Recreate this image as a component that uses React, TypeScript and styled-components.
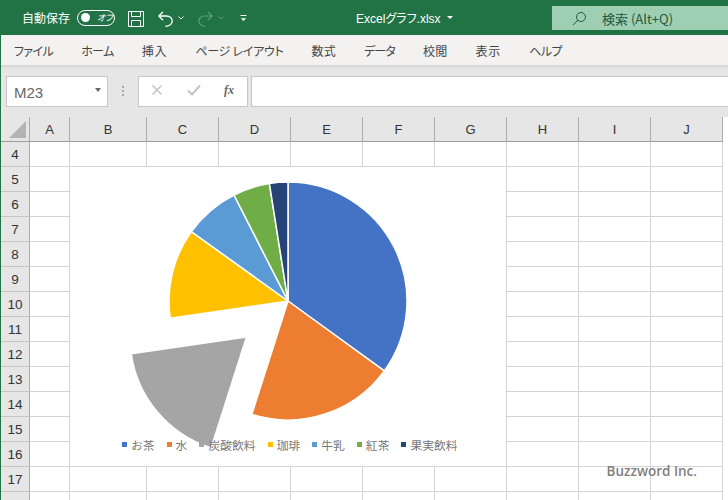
import React from 'react'
import styled, { createGlobalStyle } from 'styled-components'

const GlobalStyle = createGlobalStyle`
  html, body {
    margin: 0;
    padding: 0;
    width: 728px;
    height: 500px;
    overflow: hidden;
    background: #e6e6e6;
    font-family: 'Noto Sans CJK JP', 'Liberation Sans', sans-serif;
  }
`

const FONT = `'Noto Sans CJK JP', 'Liberation Sans', sans-serif`
const LATIN = `'Liberation Sans', 'Noto Sans CJK JP', sans-serif`

const Window = styled.div`
  position: relative;
  width: 728px;
  height: 500px;
  overflow: hidden;
  display: flex;
  flex-direction: column;
`
const TitleBar = styled.div`
  height: 35px;
  flex: none;
  background: #217346;
  display: flex;
  align-items: center;
  color: #fff;
  font-size: 12px;
`
const AutoSave = styled.span`
  margin-left: 22px;
  width: 55px;
  flex: none;
`
const Toggle = styled.div`
  width: 38px;
  height: 16px;
  flex: none;
  box-sizing: border-box;
  border: 1px solid #fff;
  border-radius: 8px;
  display: flex;
  align-items: center;
  font-size: 9px;
  font-style: italic;
  font-feature-settings: 'palt';
  white-space: nowrap;
`
const Knob = styled.i`
  width: 9px;
  height: 9px;
  flex: none;
  border-radius: 50%;
  background: #fff;
  margin: 0 7px 0 3px;
`
const TitleIcon = styled.svg<{ $left: number; $top?: number }>`
  flex: none;
  margin-left: ${(p) => p.$left}px;
  margin-top: ${(p) => p.$top ?? 0}px;
  overflow: visible;
`
const FileName = styled.div`
  margin-left: 109px;
  width: 196px;
  flex: none;
  font-family: ${LATIN};
  font-size: 12px;
  font-feature-settings: 'palt';
  display: flex;
  align-items: center;
`
const Caret = styled.i`
  margin-left: 6px;
  border-left: 3px solid transparent;
  border-right: 3px solid transparent;
  border-top: 3px solid #fff;
`
const SearchBox = styled.div`
  width: 176px;
  height: 24px;
  flex: none;
  margin-top: 1px;
  background: #9fcfb3;
  color: #24583c;
  display: flex;
  align-items: center;
  font-size: 13px;
  font-family: ${FONT};
`
const SearchLabel = styled.span`
  margin-left: 15px;
  white-space: nowrap;
`
const MenuBar = styled.nav`
  height: 30px;
  flex: none;
  background: #f3f2f1;
  border-left: 1px solid #217346;
  padding-left: 13px;
  display: flex;
  align-items: center;
  gap: 28px;
  font-size: 12px;
  font-feature-settings: 'palt';
  color: #444;
  box-sizing: border-box;
`
const MenuItem = styled.span<{ $spacing: number }>`
  white-space: nowrap;
  letter-spacing: ${(p) => p.$spacing}px;
`
const FormulaBar = styled.div`
  height: 52px;
  flex: none;
  box-sizing: border-box;
  background: linear-gradient(#d4d4d4 0, #e6e6e6 4px);
  border-left: 1px solid #217346;
  padding: 11px 0 10px 5px;
  display: flex;
  align-items: stretch;
`
const NameBox = styled.div`
  width: 102px;
  flex: none;
  box-sizing: border-box;
  background: #fff;
  border: 1px solid #c6c6c6;
  padding: 2px 6px 0 7px;
  display: flex;
  align-items: center;
  justify-content: space-between;
  font-family: ${LATIN};
  font-size: 15px;
  color: #666;
`
const DownArrow = styled.i`
  border-left: 3.5px solid transparent;
  border-right: 3.5px solid transparent;
  border-top: 4px solid #666;
  margin-top: -5px;
`
const Dots = styled.div`
  width: 30px;
  flex: none;
  display: flex;
  flex-direction: column;
  align-items: center;
  justify-content: center;
  gap: 2px;
  margin-top: -2px;
  i {
    width: 2px;
    height: 2px;
    background: #aaa;
  }
`
const FormulaButtons = styled.div`
  width: 110px;
  flex: none;
  box-sizing: border-box;
  background: #fff;
  border: 1px solid #c6c6c6;
  display: flex;
  align-items: center;
  justify-content: space-between;
  padding: 0 13px 3px 12px;
`
const Fx = styled.span`
  font-family: 'Liberation Serif', serif;
  font-style: italic;
  font-weight: bold;
  font-size: 12px;
  color: #666;
`
const FormulaInput = styled.div`
  flex: 1;
  margin-left: 3px;
  background: #fff;
  border: 1px solid #c6c6c6;
  border-right: none;
`
const Sheet = styled.div`
  flex: 1;
  min-height: 0;
  overflow: hidden;
  display: grid;
  grid-template-columns: 29px 40px 77px repeat(8, 72px);
  grid-template-rows: 25px repeat(15, 25px);
  background: #fff;
  border-left: 1px solid #217346;
  position: relative;
`
const CornerCell = styled.div`
  background: #e6e6e6;
  border-right: 1px solid #ababab;
  border-bottom: 1px solid #9d9d9d;
  box-sizing: border-box;
  display: flex;
  align-items: flex-end;
  justify-content: flex-end;
  padding: 0 3px 3px 0;
`
const CornerMark = styled.i`
  width: 0;
  height: 0;
  border-left: 17px solid transparent;
  border-bottom: 17px solid #b4b4b4;
`
const ColHeader = styled.div`
  background: #e6e6e6;
  border-right: 1px solid #ababab;
  border-bottom: 1px solid #9d9d9d;
  box-sizing: border-box;
  display: flex;
  align-items: center;
  justify-content: center;
  font-family: ${LATIN};
  font-size: 13px;
  color: #333;
`
const RowHeader = styled.div`
  background: #e6e6e6;
  border-right: 1px solid #ababab;
  border-bottom: 1px solid #c6c6c6;
  box-sizing: border-box;
  display: flex;
  align-items: center;
  justify-content: center;
  font-family: ${LATIN};
  font-size: 13.5px;
  color: #333;
`
const Cell = styled.div`
  border-right: 1px solid #d4d4d4;
  border-bottom: 1px solid #d4d4d4;
  box-sizing: border-box;
`
const Chart = styled.div`
  position: absolute;
  left: 69px;
  top: 50px;
  width: 436px;
  height: 299px;
  background: #fff;
`
const PieSvg = styled.svg`
  display: block;
  width: 436px;
  height: 299px;
`
const Legend = styled.div`
  position: absolute;
  left: 52px;
  top: 268px;
  height: 18px;
  display: flex;
  align-items: center;
  gap: 12px;
  font-size: 11.8px;
  color: #777;
  white-space: nowrap;
`
const LegendItem = styled.div`
  display: flex;
  align-items: center;
  gap: 4px;
`
const Swatch = styled.i<{ $color: string }>`
  width: 5px;
  height: 5px;
  background: ${(p) => p.$color};
`
const Watermark = styled.div`
  position: absolute;
  right: 31px;
  bottom: 20px;
  font-family: 'Open Sans', 'Liberation Sans', sans-serif;
  font-weight: 600;
  font-size: 13.5px;
  color: #7f7f7f;
`

const CX = 218
const CY = 134
const R = 119

const polar = (deg: number, r: number, cx: number, cy: number) => {
  const a = (deg * Math.PI) / 180
  return [cx + r * Math.sin(a), cy - r * Math.cos(a)]
}

const slicePath = (from: number, to: number, cx: number, cy: number, r: number) => {
  const [x1, y1] = polar(from, r, cx, cy)
  const [x2, y2] = polar(to, r, cx, cy)
  const large = to - from > 180 ? 1 : 0
  return `M${cx} ${cy}L${x1.toFixed(2)} ${y1.toFixed(2)}A${r} ${r} 0 ${large} 1 ${x2.toFixed(2)} ${y2.toFixed(2)}Z`
}

const slices = [
  { name: 'お茶', color: '#4472c4', from: 0, to: 126 },
  { name: '水', color: '#ed7d31', from: 126, to: 197.7 },
  { name: '炭酸飲料', color: '#a5a5a5', from: 197.7, to: 261.7, dx: -41.5, dy: 36, r: 116.5 },
  { name: '珈琲', color: '#ffc000', from: 261.7, to: 305.7 },
  { name: '牛乳', color: '#5b9bd5', from: 305.7, to: 333 },
  { name: '紅茶', color: '#70ad47', from: 333, to: 351 },
  { name: '果実飲料', color: '#264478', from: 351, to: 360 }
]

const columns = ['A', 'B', 'C', 'D', 'E', 'F', 'G', 'H', 'I', 'J']
const rows = Array.from({ length: 15 }, (_, i) => i + 4)
const menus = [
  { label: 'ファイル', spacing: -0.6 },
  { label: 'ホーム', spacing: -0.6 },
  { label: '挿入', spacing: 0.8 },
  { label: 'ページ レイアウト', spacing: -0.27 },
  { label: '数式', spacing: 0.3 },
  { label: 'データ', spacing: -0.9 },
  { label: '校閲', spacing: 0.3 },
  { label: '表示', spacing: 0.8 },
  { label: 'ヘルプ', spacing: -0.6 }
]

const App = () => (
  <Window>
    <GlobalStyle />
    <TitleBar>
      <AutoSave>自動保存</AutoSave>
      <Toggle>
        <Knob />
        オフ
      </Toggle>
      <TitleIcon $left={13} $top={3} width='16' height='16' viewBox='0 0 16 16' fill='none' stroke='#fff' strokeWidth='1'>
        <path d='M.5.5h15v15H.5zM3.5.5v5h9v-5M3.5 15.5v-6h9v6' />
      </TitleIcon>
      <TitleIcon $left={14} $top={3} width='15' height='16' viewBox='0 0 15 16' fill='none' stroke='#fff' strokeWidth='1.3'>
        <path d='M5 .8L.8 5 5 9.200M.8 5H8.500C12 5 14.200 7.200 14.200 10c0 2.500-2 4.800-6.700 5.500' />
      </TitleIcon>
      <TitleIcon $left={5} width='6' height='4' viewBox='0 0 6 4' fill='none' stroke='#fff' strokeWidth='1'>
        <path d='M.5.5l2.5 2.5L5.500.5' />
      </TitleIcon>
      <TitleIcon $left={14} $top={3} width='15' height='16' viewBox='0 0 15 16' fill='none' stroke='#5f9c7c' strokeWidth='1.200'>
        <path d='M10 .8L14.200 5 10 9.200M14.200 5H6.500C3 5 .8 7.200.8 10c0 2.500 2 4.800 6.700 5.500' />
      </TitleIcon>
      <TitleIcon $left={5} width='6' height='4' viewBox='0 0 6 4' fill='none' stroke='#5f9c7c' strokeWidth='1'>
        <path d='M.5.5l2.500 2.500L5.500.5' />
      </TitleIcon>
      <TitleIcon $left={16} $top={1} width='7' height='7' viewBox='0 0 7 7' fill='none' stroke='#fff' strokeWidth='1'>
        <path d='M.5.5h6' />
        <path d='M.8 3.200h5.400L3.500 6z' fill='#fff' stroke='none' />
      </TitleIcon>
      <FileName>
        Excelグラフ.xlsx
        <Caret />
      </FileName>
      <SearchBox>
        <TitleIcon $left={20} width='15' height='15' viewBox='0 0 15 15' fill='none' stroke='#24583c' strokeWidth='1'>
          <circle cx='9' cy='6' r='4.500' />
          <path d='M5.800 9.200L1 14' />
        </TitleIcon>
        <SearchLabel>検索 (Alt+Q)</SearchLabel>
      </SearchBox>
    </TitleBar>
    <MenuBar>
      {menus.map((m) => (
        <MenuItem key={m.label} $spacing={m.spacing}>
          {m.label}
        </MenuItem>
      ))}
    </MenuBar>
    <FormulaBar>
      <NameBox>
        M23
        <DownArrow />
      </NameBox>
      <Dots>
        <i />
        <i />
        <i />
      </Dots>
      <FormulaButtons>
        <svg width='12' height='12' viewBox='0 0 12 12' fill='none' stroke='#c4c4c4' strokeWidth='1.500'>
          <path d='M1.500 1.500l9 9M10.500 1.500l-9 9' />
        </svg>
        <svg width='14' height='12' viewBox='0 0 14 12' fill='none' stroke='#c4c4c4' strokeWidth='2'>
          <path d='M1 6.500l4 4 8-9' />
        </svg>
        <Fx>fx</Fx>
      </FormulaButtons>
      <FormulaInput />
    </FormulaBar>
    <Sheet>
      <CornerCell>
        <CornerMark />
      </CornerCell>
      {columns.map((c) => (
        <ColHeader key={c}>{c}</ColHeader>
      ))}
      {rows.map((r) => (
        <React.Fragment key={r}>
          <RowHeader>{r}</RowHeader>
          {columns.map((c) => (
            <Cell key={c} />
          ))}
        </React.Fragment>
      ))}
      <Chart>
        <PieSvg viewBox='0 0 436 299'>
          {slices.map((s) => (
            <path
              key={s.name}
              d={slicePath(s.from, s.to, CX + (s.dx ?? 0), CY + (s.dy ?? 0), s.r ?? R)}
              fill={s.color}
              stroke='#fff'
              strokeWidth='1.500'
              strokeLinejoin='round'
            />
          ))}
        </PieSvg>
        <Legend>
          {slices.map((s) => (
            <LegendItem key={s.name}>
              <Swatch $color={s.color} />
              {s.name}
            </LegendItem>
          ))}
        </Legend>
      </Chart>
      <Watermark>Buzzword Inc.</Watermark>
    </Sheet>
  </Window>
)

export default App
